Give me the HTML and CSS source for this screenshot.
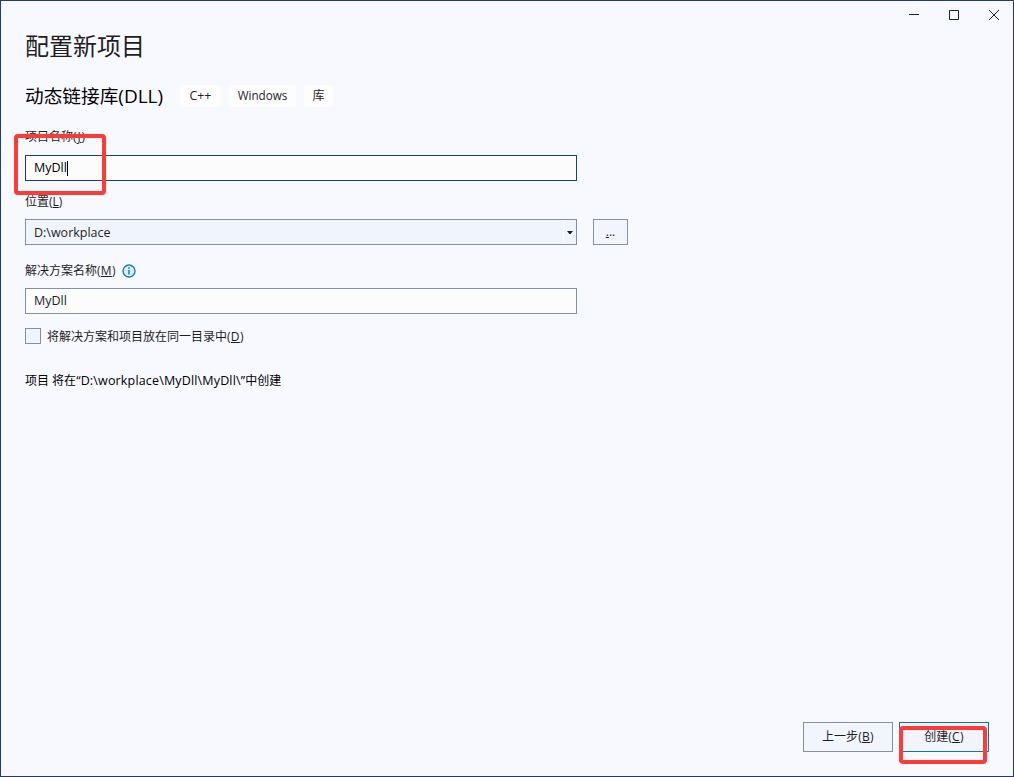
FILE: index.html
```html
<!DOCTYPE html>
<html lang="zh-CN">
<head>
    <meta charset="UTF-8">
    <meta name="viewport" content="width=device-width, initial-scale=1.0">
    <title>配置新项目</title>
    <link rel="stylesheet" href="styles.css">
</head>
<body>
    <div class="window">
        <div class="titlebar">
            <svg width="12" height="12" viewBox="0 0 12 12"><path d="M1 5.5h10" stroke="#14213f" fill="none"/></svg>
            <svg width="12" height="12" viewBox="0 0 12 12"><path d="M1.5 1.5h9v9h-9z" stroke="#14213f" fill="none"/></svg>
            <svg width="12" height="12" viewBox="0 0 12 12"><path d="M1 1l10 10M11 1L1 11" stroke="#14213f" fill="none"/></svg>
        </div>

        <div class="content">
            <h1>配置新项目</h1>
            <div class="template">
                <h2>动态链接库<span class="latin">(DLL)</span></h2>
                <span class="tag tag-cpp">C++</span>
                <span class="tag tag-windows">Windows</span>
                <span class="tag tag-lib">库</span>
            </div>

            <div class="field field-name">
                <div class="label"><span>项目名称<span class="key key-name">(<u>J</u>)</span></span></div>
                <div class="input active">MyDll<span class="caret"></span></div>
                <div class="mark mark-name"></div>
            </div>

            <div class="field field-location">
                <div class="label"><span>位置(<u>L</u>)</span></div>
                <div class="row">
                    <div class="input combo">
                        <span class="value">D:\workplace</span>
                        <span class="arrow"><svg width="6" height="4" viewBox="0 0 6 4"><path d="M0 0h6L3.6 3H2.4z" fill="#1e1e1e"/></svg></span>
                    </div>
                    <div class="button browse"><u>.</u>..</div>
                </div>
            </div>

            <div class="field field-solution">
                <div class="label">
                    <span>解决方案名称<span class="key">(<u>M</u>)</span></span>
                    <svg width="14" height="14" viewBox="0 0 14 14">
                        <circle cx="7" cy="7" r="6" fill="#d9edf5" stroke="#1583ad" stroke-width="1.4"/>
                        <path d="M7 6v4.5M7 3.3v1.5" stroke="#1583ad" stroke-width="1.5"/>
                    </svg>
                </div>
                <div class="input">MyDll</div>
            </div>

            <div class="check">
                <span class="box"></span>
                <span class="check-text">将解决方案和项目放在同一目录中<span class="key">(<u>D</u>)</span></span>
            </div>

            <div class="summary">项目 将在<span class="path">“D:\workplace\MyDll\MyDll\”</span>中创建</div>
        </div>

        <div class="footer">
            <div class="button">上一步<span class="key">(<u>B</u>)</span></div>
            <div class="button primary">创建<span class="key">(<u>C</u>)</span>
                <div class="mark mark-create"></div>
            </div>
        </div>
    </div>
</body>
</html>
```
FILE: styles.css
```css
* {
    box-sizing: border-box;
}
body {
    margin: 0;
    font-family: "Open Sans", "Noto Sans CJK SC", sans-serif;
    font-size: 12px;
    line-height: 18px;
    color: #1e1e1e;
}
.window {
    display: flex;
    flex-direction: column;
    height: 777px;
    border: 1px solid #1f3c78;
    background: #f8f9ff;
}
.titlebar {
    display: flex;
    justify-content: flex-end;
    gap: 28px;
    height: 28px;
    padding: 8px 13px 0 0;
}
.titlebar svg {
    display: block;
}
.content {
    flex: 1;
    padding: 0 24px;
}
h1 {
    margin: 0;
    font-size: 24px;
    font-weight: 400;
    line-height: 34px;
}
.template {
    display: flex;
    align-items: center;
    height: 22px;
    margin-top: 22px;
}
h2 {
    width: 155px;
    margin: 0;
    font-size: 18.67px;
    font-weight: 400;
    line-height: 22px;
    color: #000;
    white-space: nowrap;
}
h2 .latin {
    font-size: 19px;
}
.tag {
    height: 22px;
    margin-right: 8px;
    border-radius: 3px;
    background: #fdfdfe;
    line-height: 22px;
    text-align: center;
}
.tag-cpp {
    width: 41px;
    font-size: 12.3px;
}
.tag-windows {
    width: 67px;
    font-size: 11.7px;
    line-height: 21px;
}
.tag-lib {
    width: 29px;
}
.field {
    position: relative;
}
.field-name {
    margin-top: 21px;
}
.field-location {
    margin-top: 12px;
}
.field-location .input,
.field-location .browse,
.field-solution .input {
    margin-top: 8px;
}
.field-solution {
    margin-top: 17px;
}
.label {
    display: flex;
    align-items: center;
    gap: 6px;
    height: 18px;
}
.key {
    letter-spacing: 0.3px;
}
.key-name {
    letter-spacing: 0.9px;
}
u {
    text-underline-offset: 1px;
    text-decoration-thickness: 1px;
}
.row {
    display: flex;
    gap: 16px;
}
.input {
    display: flex;
    align-items: center;
    width: 552px;
    height: 26px;
    margin-top: 9px;
    padding-left: 8px;
    border: 1px solid #8490a5;
    background: #fcfcfc;
    font-size: 12.5px;
}
.input.active {
    border-color: #1f3c78;
    color: #000;
}
.caret {
    width: 1px;
    height: 15px;
    background: #000;
}
.combo {
    justify-content: space-between;
    background: #f0f5fd;
}
.value {
    padding-top: 2px;
}
.arrow {
    display: flex;
    align-items: center;
    justify-content: center;
    width: 13px;
    height: 24px;
    padding-top: 2px;
    border-left: 1px solid #fcfcfc;
}
.button {
    position: relative;
    width: 90px;
    height: 30px;
    border: 1px solid #8490a5;
    background: #f2f5fd;
    line-height: 28px;
    text-align: center;
}
.browse {
    width: 35px;
    height: 26px;
    line-height: 24px;
}
.primary {
    border-color: #0e70c0;
}
.check {
    display: flex;
    align-items: center;
    gap: 6px;
    height: 18px;
    margin-top: 13px;
}
.check-text {
    padding-top: 2px;
}
.box {
    width: 16px;
    height: 16px;
    border: 1px solid #8490a5;
    background: #f0f4fd;
}
.summary {
    margin-top: 27px;
    color: #000;
}
.path {
    font-size: 12.5px;
    letter-spacing: 0.16px;
}
.footer {
    display: flex;
    justify-content: flex-end;
    gap: 6px;
    padding: 0 24px 24px 0;
}
/* highlight frames drawn over the form */
.mark {
    position: absolute;
    border: 4px solid #ff3b38;
    border-radius: 4px;
}
.mark-name {
    top: 6px;
    left: -11px;
    width: 92px;
    height: 61px;
}
.mark-create {
    top: 3px;
    left: -1px;
    width: 88px;
    height: 38px;
}
```
